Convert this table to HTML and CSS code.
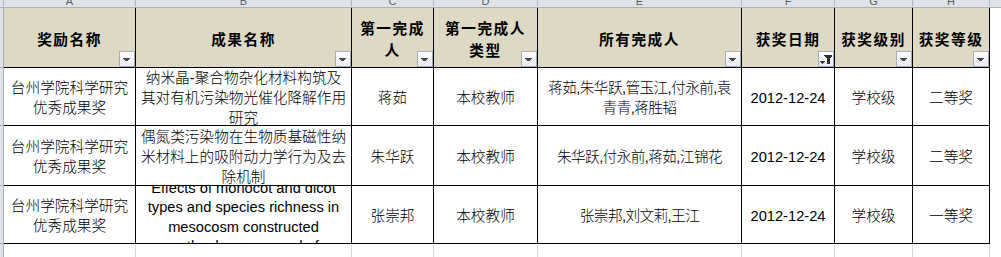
FILE: index.html
```html
<!DOCTYPE html>
<html lang="zh">
<head>
<meta charset="utf-8">
<title>获奖</title>
<link rel="stylesheet" href="styles.css">
</head>
<body>
<div class="colbar">
  <div class="cl corner"></div>
  <div class="cl"><span>A</span></div>
  <div class="cl"><span>B</span></div>
  <div class="cl"><span>C</span></div>
  <div class="cl"><span>D</span></div>
  <div class="cl"><span>E</span></div>
  <div class="cl"><span>F</span></div>
  <div class="cl"><span>G</span></div>
  <div class="cl"><span>H</span></div>
  <div class="cl"><span></span></div>
</div>
<div class="main">
  <div class="rowstrip">
    <div class="rh"></div><div class="rh"></div><div class="rh"></div><div class="rh"></div><div class="rh"></div>
  </div>
  <div class="content">
    <div class="tbl">
      <div class="th">奖励名称<span class="fbtn"><svg width="14" height="14" viewBox="0 0 14 14"><path d="M3 6h7v1H9v1H8v1H5V8H4V7H3z" fill="#4a4a4a"/></svg></span></div>
      <div class="th">成果名称<span class="fbtn"><svg width="14" height="14" viewBox="0 0 14 14"><path d="M3 6h7v1H9v1H8v1H5V8H4V7H3z" fill="#4a4a4a"/></svg></span></div>
      <div class="th">第一完成<br>人<span class="fbtn"><svg width="14" height="14" viewBox="0 0 14 14"><path d="M3 6h7v1H9v1H8v1H5V8H4V7H3z" fill="#4a4a4a"/></svg></span></div>
      <div class="th">第一完成人<br>类型<span class="fbtn"><svg width="14" height="14" viewBox="0 0 14 14"><path d="M3 6h7v1H9v1H8v1H5V8H4V7H3z" fill="#4a4a4a"/></svg></span></div>
      <div class="th">所有完成人<span class="fbtn"><svg width="14" height="14" viewBox="0 0 14 14"><path d="M3 6h7v1H9v1H8v1H5V8H4V7H3z" fill="#4a4a4a"/></svg></span></div>
      <div class="th">获奖日期<span class="fbtn"><svg width="14" height="14" viewBox="0 0 14 14"><path d="M1 9h5v1H5v1H4v1H3v-1H2v-1H1z" fill="#3a3a3a"/><path d="M5 3h8v2h-1v1h-1v6H8V6H7V5H6V4H5z" fill="#2e2e2e"/></svg></span></div>
      <div class="th">获奖级别<span class="fbtn"><svg width="14" height="14" viewBox="0 0 14 14"><path d="M3 6h7v1H9v1H8v1H5V8H4V7H3z" fill="#4a4a4a"/></svg></span></div>
      <div class="th">获奖等级<span class="fbtn"><svg width="14" height="14" viewBox="0 0 14 14"><path d="M3 6h7v1H9v1H8v1H5V8H4V7H3z" fill="#4a4a4a"/></svg></span></div>

      <div class="td">台州学院科学研究<br>优秀成果奖</div>
      <div class="td">纳米晶-聚合物杂化材料构筑及<br>其对有机污染物光催化降解作用<br>研究</div>
      <div class="td">蒋茹</div>
      <div class="td">本校教师</div>
      <div class="td names">蒋茹,朱华跃,管玉江,付永前,袁<br>青青,蒋胜韬</div>
      <div class="td">2012-12-24</div>
      <div class="td">学校级</div>
      <div class="td">二等奖</div>

      <div class="td">台州学院科学研究<br>优秀成果奖</div>
      <div class="td">偶氮类污染物在生物质基磁性纳<br>米材料上的吸附动力学行为及去<br>除机制</div>
      <div class="td">朱华跃</div>
      <div class="td">本校教师</div>
      <div class="td names">朱华跃,付永前,蒋茹,江锦花</div>
      <div class="td">2012-12-24</div>
      <div class="td">学校级</div>
      <div class="td">二等奖</div>

      <div class="td">台州学院科学研究<br>优秀成果奖</div>
      <div class="td en">Effects of monocot and dicot<br>types and species richness in<br>mesocosm constructed<br>wetlands on removal of</div>
      <div class="td">张崇邦</div>
      <div class="td">本校教师</div>
      <div class="td names">张崇邦,刘文莉,王江</div>
      <div class="td">2012-12-24</div>
      <div class="td">学校级</div>
      <div class="td">一等奖</div>
    </div>
    <div class="below">
      <div class="bc"></div><div class="bc"></div><div class="bc"></div><div class="bc"></div>
      <div class="bc"></div><div class="bc"></div><div class="bc"></div><div class="bc"></div>
    </div>
  </div>
  <div class="colI"></div>
</div>
</body>
</html>
```

FILE: styles.css
```css
* { box-sizing: border-box; margin: 0; padding: 0; }
html, body { width: 1001px; height: 257px; overflow: hidden; background: #fff; }
body {
  font-family: "Liberation Sans", "Noto Sans CJK SC", sans-serif;
  font-size: 14.67px;
  color: #000;
}

.colbar {
  display: grid;
  grid-template-columns: 3px 131px 215px 81px 103px 203px 92px 77px 76px 1fr;
  column-gap: 1px;
  height: 8px;
  background: #b4bac2;
  border-bottom: 1px solid #a9b0b9;
  overflow: hidden;
}
.cl {
  background: #dfe3e8;
  text-align: center;
  font-family: "Liberation Sans", sans-serif;
  font-size: 11px;
  color: #5a5f66;
  overflow: hidden;
}
.cl span { display: block; line-height: 12px; margin-top: -5px; }

.main { display: flex; height: 249px; }
.rowstrip {
  width: 4px;
  display: grid;
  grid-template-rows: 59px 57px 59px 57px 20px;
  row-gap: 1px;
  background: #a9b0b9;
  border-right: 1px solid #a9b0b9;
}
.rh { background: #dfe3e8; }

.content { width: 986px; display: flex; flex-direction: column; }
.tbl {
  display: grid;
  grid-template-columns: 131px 215px 81px 103px 203px 92px 77px 76px;
  grid-template-rows: 59px 57px 59px 57px;
  gap: 1px;
  background: #000;
  border-right: 1px solid #000;
  border-bottom: 1px solid #000;
}
.th {
  position: relative;
  background: #ddd9c4;
  font-family: "Noto Sans CJK SC", sans-serif;
  font-weight: 700;
  letter-spacing: 1.5px;
  line-height: 22px;
  padding-top: 3px;
  display: flex;
  align-items: center;
  justify-content: center;
  text-align: center;
  white-space: nowrap;
}
.fbtn {
  position: absolute;
  right: 0;
  bottom: 0;
  width: 16px;
  height: 16px;
  border: 1px solid #a9adb3;
  background: linear-gradient(#fdfdfe, #e7eaef);
  display: flex;
  align-items: center;
  justify-content: center;
}
.fbtn svg { display: block; shape-rendering: crispEdges; }

.td {
  background: #fff;
  display: flex;
  align-items: center;
  justify-content: center;
  text-align: center;
  white-space: nowrap;
  overflow: hidden;
  line-height: 20px;
  padding-top: 2px;
  font-weight: 300;
}
.names { letter-spacing: -0.6px; }
.en { line-height: 19.5px; padding-top: 6px; font-weight: 400; }

.below {
  flex: 1;
  display: grid;
  grid-template-columns: 131px 215px 81px 103px 203px 92px 77px 76px;
  column-gap: 1px;
  background: #d9d9d9;
  border-right: 1px solid #d9d9d9;
}
.bc { background: #fff; }
.colI { flex: 1; background: #fff; }
```
